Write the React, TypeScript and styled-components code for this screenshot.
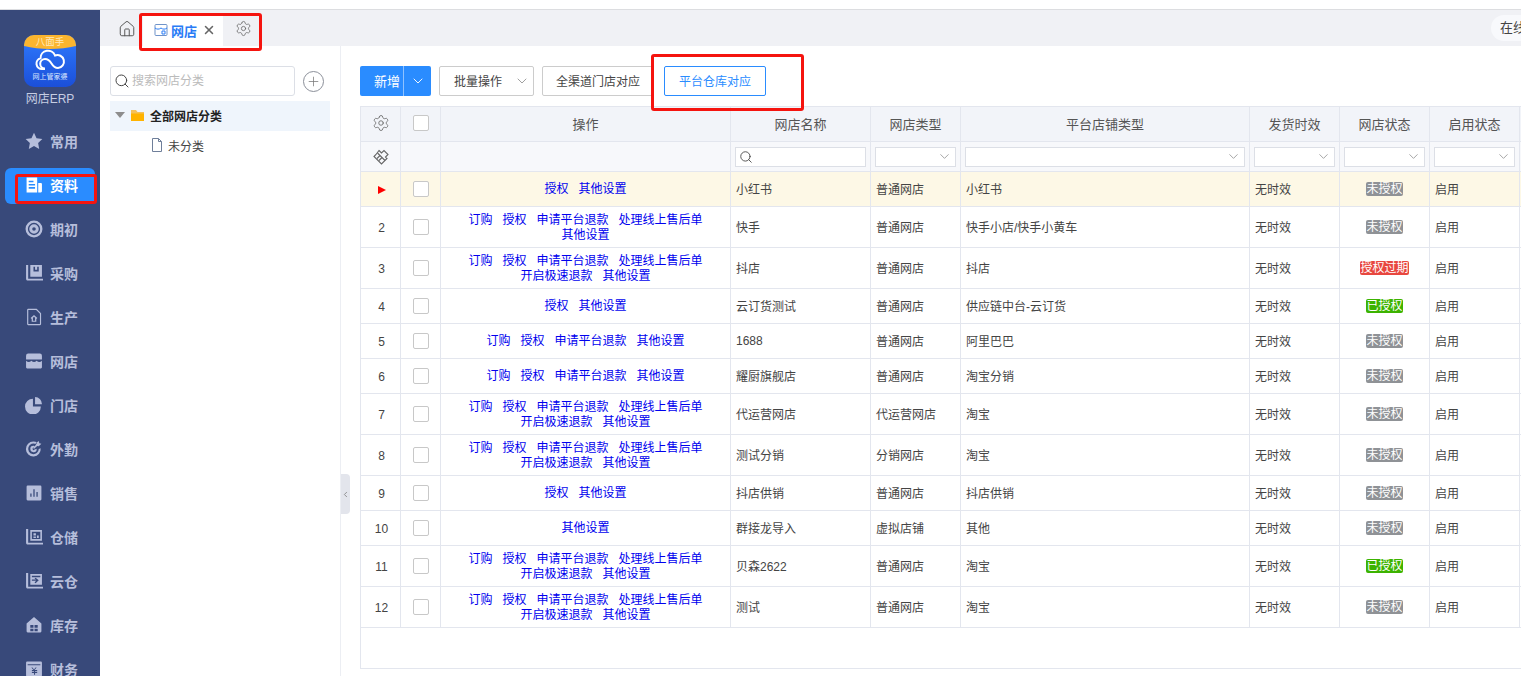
import React from 'react';
import styled, { createGlobalStyle } from 'styled-components';
import { ChevronDown, ChevronLeft, House, Plus, Search, Settings, X } from 'lucide-react';

const GlobalStyle = createGlobalStyle`
  html, body { margin: 0; padding: 0; height: 100%; overflow: hidden; background: #fff; }
  * { box-sizing: border-box; }
  body { font-family: "Liberation Sans", "Noto Sans CJK SC", sans-serif; font-size: 12px; color: #444; }
`;

const Page = styled.div`
  position: relative;
  width: 1521px;
  height: 676px;
  overflow: hidden;
  display: flex;
  flex-direction: column;
`;
const TopStrip = styled.div`
  flex: 0 0 10px;
  border-bottom: 1px solid #dcdde0;
`;
const Body = styled.div`
  flex: 1;
  display: flex;
  min-height: 0;
`;

/* left nav */
const Sidebar = styled.nav`
  flex: 0 0 100px;
  background: #38497a;
  display: flex;
  flex-direction: column;
  align-items: center;
  padding-top: 25px;
  overflow: hidden;
`;
const LogoBox = styled.svg`
  width: 52px;
  height: 52px;
  flex: none;
`;
const BrandName = styled.div`
  margin-top: 4px;
  margin-bottom: 17px;
  color: #c6cde2;
  font-size: 12px;
  line-height: 16px;
`;
const NavItem = styled.div<{ $active?: boolean }>`
  flex: none;
  width: 90px;
  height: 36px;
  margin-bottom: 8px;
  padding: 0 0 2px 20px;
  display: flex;
  align-items: center;
  gap: 7px;
  border-radius: 6px;
  font-size: 14px;
  font-weight: 700;
  background: ${(p) => (p.$active ? '#2a8cff' : 'transparent')};
  color: ${(p) => (p.$active ? '#fff' : '#b6bedb')};
`;
const NavGlyph = styled.svg`
  width: 18px;
  height: 18px;
  flex: none;
  fill: currentColor;
`;

/* tabs */
const Main = styled.div`
  flex: 1;
  min-width: 0;
  display: flex;
  flex-direction: column;
`;
const TabBar = styled.div`
  flex: 0 0 36px;
  background: #f0f1f5;
  display: flex;
  align-items: flex-end;
  padding-left: 18px;
  color: #555;
`;
const HomeBtn = styled.div`
  height: 36px;
  display: flex;
  align-items: center;
  margin-right: 7px;
  padding-top: 2px;
`;
const Tab = styled.div`
  width: 80px;
  height: 30px;
  background: #fff;
  display: flex;
  align-items: center;
  padding: 0 0 2px 11px;
  gap: 3px;
  color: #2a7cf6;
  font-size: 13px;
  font-weight: 700;
`;
const TabClose = styled(X)`
  color: #666;
  margin-left: 2px;
`;
const TabGear = styled.div`
  height: 36px;
  display: flex;
  align-items: center;
  margin-left: 12px;
  color: #666;
`;
const OnlinePill = styled.div`
  flex: none;
  width: 70px;
  height: 26px;
  margin: 0 -40px 5px auto;
  padding-left: 9px;
  border-radius: 13px;
  background: #f8f9fc;
  font-size: 13px;
  line-height: 26px;
  color: #444;
  white-space: nowrap;
`;

/* tree */
const Content = styled.div`
  flex: 1;
  display: flex;
  min-height: 0;
`;
const TreePanel = styled.aside`
  position: relative;
  flex: 0 0 241px;
  padding: 20px 10px 0;
  border-right: 1px solid #eceef3;
`;
const TreeSearchRow = styled.div`
  display: flex;
  align-items: center;
  gap: 8px;
  height: 30px;
`;
const TreeSearch = styled.div`
  width: 185px;
  height: 30px;
  border: 1px solid #dcdfe6;
  border-radius: 3px;
  display: flex;
  align-items: center;
  gap: 2px;
  padding: 0 0 3px 3px;
  color: #bbb;
  font-size: 12px;
  svg { color: #444; margin-top: 3px; }
`;
const RoundAdd = styled.div`
  width: 21px;
  height: 21px;
  border: 1px solid #8b8f99;
  border-radius: 50%;
  display: flex;
  align-items: center;
  justify-content: center;
  color: #777;
`;
const TreeRoot = styled.div`
  margin-top: 5px;
  width: 220px;
  height: 30px;
  background: #eff5fc;
  display: flex;
  align-items: center;
  padding: 0 0 2px 5px;
  gap: 5px;
  color: #222;
  font-weight: 700;
`;
const Caret = styled.span`
  width: 0;
  height: 0;
  border-left: 5px solid transparent;
  border-right: 5px solid transparent;
  border-top: 6px solid #8d8d8d;
`;
const TreeLeaf = styled.div`
  height: 30px;
  display: flex;
  align-items: center;
  padding: 0 0 2px 41px;
  gap: 5px;
  color: #444;
`;
const Collapse = styled.div`
  position: absolute;
  right: -10px;
  top: 428px;
  width: 9px;
  height: 40px;
  background: #e3e5ec;
  border-radius: 0 4px 4px 0;
  display: flex;
  align-items: center;
  justify-content: center;
  color: #777;
`;

/* toolbar + table */
const TablePanel = styled.section`
  flex: 1;
  min-width: 0;
  padding: 20px 0 0 19px;
  overflow: hidden;
`;
const Toolbar = styled.div`
  height: 30px;
  margin-bottom: 10px;
  display: flex;
  gap: 8px;
`;
const SplitPrimary = styled.div`
  width: 71px;
  height: 30px;
  border-radius: 2px;
  background: #2a8cff;
  color: #fff;
  display: flex;
  align-items: center;
`;
const SplitLabel = styled.span`
  flex: 0 0 44px;
  border-right: 1px solid #8fc2ff;
  height: 30px;
  line-height: 31px;
  padding-left: 14px;
  font-size: 13px;
`;
const SplitArrow = styled.span`
  flex: 1;
  display: flex;
  justify-content: center;
`;
const Btn = styled.div<{ $w: number; $primary?: boolean; $ml?: number }>`
  width: ${(p) => p.$w}px;
  height: 30px;
  margin-left: ${(p) => p.$ml ?? 0}px;
  padding-bottom: 1px;
  border: 1px solid ${(p) => (p.$primary ? '#2a8cff' : '#ccc')};
  border-radius: 2px;
  color: ${(p) => (p.$primary ? '#2a8cff' : '#444')};
  display: flex;
  align-items: center;
  justify-content: center;
  gap: 12px;
  svg { color: #888; margin: 1px -11px 0 0; }
`;
const Grid = styled.table`
  table-layout: fixed;
  border-collapse: collapse;
  width: 1250px;
  td, th { border: 1px solid #e3e6ee; padding: 0; font-weight: 400; }
`;
const HeadRow = styled.tr`
  height: 35px;
  background: #f2f4f9;
  color: #555;
  font-size: 13px;
  text-align: center;
  th { padding-bottom: 2px; }
`;
const FilterRow = styled.tr`
  height: 30px;
  background: #f7f8fb;
`;
const DataRow = styled.tr<{ $h: number; $current?: boolean }>`
  height: ${(p) => p.$h}px;
  background: ${(p) => (p.$current ? '#fdf8e6' : '#fff')};
`;
const CenterCell = styled.td`
  text-align: center;
`;
const IndexCell = styled.td`
  text-align: center;
  padding: 1px 0 0 2px !important;
`;
const ActionCell = styled.td`
  padding-top: 1px !important;
`;
const TextCell = styled.td`
  padding: 0 5px 1px !important;
  white-space: nowrap;
  overflow: hidden;
`;
const Check = styled.span`
  display: inline-block;
  width: 16px;
  height: 16px;
  border: 1px solid #c8c8c8;
  border-radius: 2px;
  background: #fff;
  vertical-align: middle;
`;
const Flag = styled.span`
  display: inline-block;
  width: 0;
  height: 0;
  border-left: 8px solid #f00;
  border-top: 4px solid transparent;
  border-bottom: 4px solid transparent;
`;
const Actions = styled.div`
  display: flex;
  flex-wrap: wrap;
  justify-content: center;
  column-gap: 10px;
  padding: 0 5px;
  line-height: 15px;
  color: #0000ee;
`;
const FilterBox = styled.div`
  height: 20px;
  margin: 0 4px;
  border: 1px solid #dcdfe6;
  background: #fff;
  display: flex;
  align-items: center;
  justify-content: space-between;
  padding: 0 3px;
  color: #888;
  svg.search { color: #444; }
`;
const Status = styled.span<{ $bg: string }>`
  display: inline-block;
  padding: 0;
  height: 14px;
  line-height: 14px;
  border-radius: 2px;
  background: ${(p) => p.$bg};
  color: #fff;
`;
const EmptyBand = styled.div`
  width: 1250px;
  height: 41px;
  border-left: 1px solid #e3e6ee;
  border-bottom: 1px solid #e3e6ee;
`;

/* red review marks over the shot */
const Mark = styled.div<{ $x: number; $y: number; $w: number; $h: number }>`
  position: absolute;
  left: ${(p) => p.$x}px;
  top: ${(p) => p.$y}px;
  width: ${(p) => p.$w}px;
  height: ${(p) => p.$h}px;
  border: 3px solid #f5140f;
  border-radius: 3px;
  pointer-events: none;
`;

const icons: Record<string, React.ReactNode> = {
  star: <path d="M8.500 .8l2.400 5 5.500.8-4 3.900 1 5.500-4.900-2.700-4.900 2.700 1-5.500-4-3.900 5.500-.8z" />,
  doc: <path fillRule="evenodd" d="M1.500 1.500h10v14h-10zM3.500 4.500v1.500h4.500V4.500zm0 3v1.500h6V7.500zm0 3v1.500h6v-1.500zM12.500 6.500h2.500a1 1 0 0 1 1 1v7a1 1 0 0 1-1 1h-2.500z" />,
  ring: <path fillRule="evenodd" d="M8.500 .5a8 8 0 1 1 0 16 8 8 0 0 1 0-16zm0 2.200a5.800 5.800 0 1 0 0 11.600 5.800 5.800 0 0 0 0-11.600zm0 1.300a4.500 4.500 0 1 1 0 9 4.500 4.500 0 0 1 0-9zm0 2.800a1.700 1.700 0 1 0 0 3.400 1.700 1.700 0 0 0 0-3.400z" />,
  buy: <path fillRule="evenodd" d="M1 1h2v13h14v1.500H3a1.500 1.500 0 0 1-2-1.500zM5 1h11v11H5zm3 1.500V7h5V2.500h-1.500V5.500h-2V2.500z" />,
  make: <path fillRule="evenodd" d="M3 .8h8l4.200 4.200v10.200a1 1 0 0 1-1 1H3a1 1 0 0 1-1-1V1.800a1 1 0 0 1 1-1zm.1 1.100v13.300h11V5.500L10.500 1.900zM8.500 6.500l3.200 3-1 .8V13H6.300v-2.700l-1-.8zm0 1.700L7.500 9.200V12h2V9.200z" />,
  shop: <path fillRule="evenodd" d="M3 1.500h11a2 2 0 0 1 2 2V7H1V3.500a2 2 0 0 1 2-2zM1 8.300c1.700 1.500 3.400 1.500 5 0 1.700 1.500 3.400 1.500 5 0 1.700 1.500 3.400 1.500 5 0v6.200a1 1 0 0 1-1 1H2a1 1 0 0 1-1-1z" />,
  pie: <path d="M7.500 2.500v7.500H15A7.500 7.500 0 1 1 7.500 2.500zM9.500 1A6.500 6.500 0 0 1 16 7.800H9.500z" />,
  aim: <path fillRule="evenodd" d="M8 1.500a7 7 0 0 1 3.500.9L10.500 4A5 5 0 1 0 13 8.500l1.800-.8A7 7 0 1 1 8 1.500zm0 4a3 3 0 0 1 .9.100L8 7.500a1 1 0 1 0 1 1.500l2-.8A3 3 0 1 1 8 5.500zM13 1l.5 2 2 .5-2.500 2.500-1.500-.4L8.700 8.300l-1-1 2.700-2.700-.4-1.500z" />,
  sales: <path fillRule="evenodd" d="M2.500 1.500h12a1 1 0 0 1 1 1v12a1 1 0 0 1-1 1h-12a1 1 0 0 1-1-1v-12a1 1 0 0 1 1-1zM5 9v3h1.200V9zm2.900-4v7h1.200V5zm2.900 2.500V12H12V7.500z" />,
  store: <path fillRule="evenodd" d="M1 1h2v13h14v1.500H3a1.500 1.500 0 0 1-2-1.500zM5 2h11v10H5zm1.500 1.500v7H14.500v-7zM8 5h2.300v2H8zm0 3h2.300v1.500H8zm3.300-1H13v2.500h-1.700z" />,
  cloud: <path fillRule="evenodd" d="M1 1h2v13h14v1.500H3a1.500 1.500 0 0 1-2-1.500zM5 2h11v10H5zm1.500 1.500V5H14.500V3.500zM6.500 7v1.300h4L9 9.800l1 .8 3-2.900-3-2.300-1 .9 1.500.7z" />,
  stock: <path fillRule="evenodd" d="M8.500 1L15.500 7v7.500a1 1 0 0 1-1 1h-12a1 1 0 0 1-1-1V7zM5 8.500V11h3V8.500zm4 0V11h3V8.500zM5 12v2.500h3V12zm4 0v2.500h3V12z" />,
  money: <path fillRule="evenodd" d="M2 1.500h13a1 1 0 0 1 1 1v12a1 1 0 0 1-1 1H2a1 1 0 0 1-1-1v-12a1 1 0 0 1 1-1zM2.500 4v1h12V4zm3.500 3l2 2.500H6.500v1h2v.7h-2v1h2V14h1v-1.800h2v-1h-2v-.7h2v-1H9l2-2.500H10L8.500 9 7 7z" />,
};

const navItems = [
  { label: '常用', icon: 'star' },
  { label: '资料', icon: 'doc', active: true },
  { label: '期初', icon: 'ring' },
  { label: '采购', icon: 'buy' },
  { label: '生产', icon: 'make' },
  { label: '网店', icon: 'shop' },
  { label: '门店', icon: 'pie' },
  { label: '外勤', icon: 'aim' },
  { label: '销售', icon: 'sales' },
  { label: '仓储', icon: 'store' },
  { label: '云仓', icon: 'cloud' },
  { label: '库存', icon: 'stock' },
  { label: '财务', icon: 'money' },
];

const FULL = ['订购', '授权', '申请平台退款', '处理线上售后单', '开启极速退款', '其他设置'];
const FULL_NO_SPEED = ['订购', '授权', '申请平台退款', '处理线上售后单', '其他设置'];
const SHORT = ['授权', '其他设置'];
const MID = ['订购', '授权', '申请平台退款', '其他设置'];

const UNAUTH = { text: '未授权', bg: '#8f9296' };
const OK = { text: '已授权', bg: '#3cb300' };
const EXPIRED = { text: '授权过期', bg: '#e8473f' };

const rows = [
  { h: 35, actions: SHORT, name: '小红书', type: '普通网店', platform: '小红书', status: UNAUTH },
  { h: 41, actions: FULL_NO_SPEED, name: '快手', type: '普通网店', platform: '快手小店/快手小黄车', status: UNAUTH },
  { h: 41, actions: FULL, name: '抖店', type: '普通网店', platform: '抖店', status: EXPIRED },
  { h: 35, actions: SHORT, name: '云订货测试', type: '普通网店', platform: '供应链中台-云订货', status: OK },
  { h: 35, actions: MID, name: '1688', type: '普通网店', platform: '阿里巴巴', status: UNAUTH },
  { h: 35, actions: MID, name: '耀厨旗舰店', type: '普通网店', platform: '淘宝分销', status: UNAUTH },
  { h: 41, actions: FULL, name: '代运营网店', type: '代运营网店', platform: '淘宝', status: UNAUTH },
  { h: 41, actions: FULL, name: '测试分销', type: '分销网店', platform: '淘宝', status: UNAUTH },
  { h: 35, actions: SHORT, name: '抖店供销', type: '普通网店', platform: '抖店供销', status: UNAUTH },
  { h: 35, actions: ['其他设置'], name: '群接龙导入', type: '虚拟店铺', platform: '其他', status: UNAUTH },
  { h: 41, actions: FULL, name: '贝森2622', type: '普通网店', platform: '淘宝', status: OK },
  { h: 41, actions: FULL, name: '测试', type: '普通网店', platform: '淘宝', status: UNAUTH },
];

const columns = [
  { w: 40, title: '' },
  { w: 40, title: '' },
  { w: 290, title: '操作' },
  { w: 140, title: '网店名称' },
  { w: 90, title: '网店类型' },
  { w: 289, title: '平台店铺类型' },
  { w: 90, title: '发货时效' },
  { w: 90, title: '网店状态' },
  { w: 90, title: '启用状态' },
  { w: 91, title: '' },
];

function ShopTabIcon() {
  return (
    <svg width="14" height="14" viewBox="0 0 14 14" fill="none" stroke="#6f93c9" strokeWidth="1">
      <rect x="1" y="1.500" width="12" height="11" rx="1" />
      <path d="M1 5c2 1.500 4 1.500 6 0 2 1.500 4 1.500 6 0" stroke="#2a7cf6" />
      <path d="M8 8h3v3H8z" stroke="#2a7cf6" />
    </svg>
  );
}

function Logo() {
  return (
    <LogoBox viewBox="0 0 52 52">
      <defs>
        <linearGradient id="logoBlue" x1="0" y1="0" x2="0" y2="1">
          <stop offset="0" stopColor="#2f7bff" />
          <stop offset="1" stopColor="#1b4fd8" />
        </linearGradient>
      </defs>
      <rect width="52" height="52" rx="10" fill="url(#logoBlue)" />
      <path d="M0 11V10A10 10 0 0 1 10 0h32a10 10 0 0 1 10 10v1c-16 4-36 4-52 0z" fill="#fbb52f" />
      <text x="26" y="10" fontSize="9.500" fill="#ffe9bd" textAnchor="middle">八面手</text>
      <g fill="none" stroke="#fff" strokeWidth="2">
        <path d="M21 34h-3a5.500 5.500 0 0 1-1.500-10.800A7.500 7.500 0 0 1 31 20.500 6.500 6.500 0 1 1 34 33c-3 0-5-2-6.500-4.500S24 24 21 24a4.800 4.800 0 0 0 0 9.600" />
      </g>
      <text x="26" y="44" fontSize="7" fill="#dbe7ff" textAnchor="middle">网上管家婆</text>
    </LogoBox>
  );
}

function FilterEraser() {
  return (
    <svg width="18" height="18" viewBox="0 0 18 18" fill="none" stroke="#666" strokeWidth="1.100" style={{ verticalAlign: 'middle' }}>
      <path d="M7 2.500l2.500 2.500 2.500-2.500 4 4-2.500 2.500 1.500 1.500-5.500 5.500L2 8.500l2-2z" />
      <path d="M5.500 5l7.500 7.500M5 10.500l3-3M7 12.500l3-3" />
    </svg>
  );
}

function Folder() {
  return (
    <svg width="15" height="13" viewBox="0 0 15 13">
      <path d="M1 1h5l1.500 2H14v2H1z" fill="#f5c15a" />
      <path d="M1 4.500h13V12H1z" fill="#ffb300" />
    </svg>
  );
}

function Sheet() {
  return (
    <svg width="12" height="14" viewBox="0 0 12 14" fill="none" stroke="#6f7f9a">
      <path d="M1.500.500h6l3 3v10h-9zM7.500.500v3h3" />
    </svg>
  );
}

export default function App() {
  return (
    <Page>
      <GlobalStyle />
      <TopStrip />
      <Body>
        <Sidebar>
          <Logo />
          <BrandName>网店ERP</BrandName>
          {navItems.map((item) => (
            <NavItem key={item.label} $active={item.active}>
              <NavGlyph viewBox="0 0 17 17">{icons[item.icon]}</NavGlyph>
              {item.label}
            </NavItem>
          ))}
        </Sidebar>
        <Main>
          <TabBar>
            <HomeBtn>
              <House size={18} strokeWidth={1.3} />
            </HomeBtn>
            <Tab>
              <ShopTabIcon />
              网店
              <TabClose size={14} strokeWidth={2.6} />
            </Tab>
            <TabGear>
              <Settings size={17} strokeWidth={1.1} />
            </TabGear>
            <OnlinePill>在线客服</OnlinePill>
          </TabBar>
          <Content>
            <TreePanel>
              <TreeSearchRow>
                <TreeSearch>
                  <Search size={16} strokeWidth={1.5} />
                  搜索网店分类
                </TreeSearch>
                <RoundAdd>
                  <Plus size={15} strokeWidth={1.2} />
                </RoundAdd>
              </TreeSearchRow>
              <TreeRoot>
                <Caret />
                <Folder />
                全部网店分类
              </TreeRoot>
              <TreeLeaf>
                <Sheet />
                未分类
              </TreeLeaf>
              <Collapse>
                <ChevronLeft size={9} strokeWidth={2} />
              </Collapse>
            </TreePanel>
            <TablePanel>
              <Toolbar>
                <SplitPrimary>
                  <SplitLabel>新增</SplitLabel>
                  <SplitArrow>
                    <ChevronDown size={16} strokeWidth={1.4} />
                  </SplitArrow>
                </SplitPrimary>
                <Btn $w={95}>
                  批量操作
                  <ChevronDown size={16} strokeWidth={1.2} />
                </Btn>
                <Btn $w={112}>全渠道门店对应</Btn>
                <Btn $w={102} $primary $ml={2}>平台仓库对应</Btn>
              </Toolbar>
              <Grid>
                <colgroup>
                  {columns.map((c, i) => (
                    <col key={i} width={c.w} />
                  ))}
                </colgroup>
                <thead>
                  <HeadRow>
                    <th><Settings size={18} strokeWidth={1.1} color="#666" style={{ verticalAlign: 'middle' }} /></th>
                    <th><Check /></th>
                    {columns.slice(2).map((c, i) => (
                      <th key={i}>{c.title}</th>
                    ))}
                  </HeadRow>
                  <FilterRow>
                    <CenterCell><FilterEraser /></CenterCell>
                    <td />
                    <td />
                    <td>
                      <FilterBox><Search className="search" size={14} strokeWidth={1.5} /></FilterBox>
                    </td>
                    {[0, 1, 2, 3, 4].map((i) => (
                      <td key={i}>
                        <FilterBox>
                          <span />
                          <ChevronDown size={15} strokeWidth={1.2} />
                        </FilterBox>
                      </td>
                    ))}
                    <td />
                  </FilterRow>
                </thead>
                <tbody>
                  {rows.map((r, i) => (
                    <DataRow key={i} $h={r.h} $current={i === 0}>
                      <IndexCell>{i === 0 ? <Flag /> : i + 1}</IndexCell>
                      <CenterCell><Check /></CenterCell>
                      <ActionCell>
                        <Actions>
                          {r.actions.map((a) => (
                            <span key={a}>{a}</span>
                          ))}
                        </Actions>
                      </ActionCell>
                      <TextCell>{r.name}</TextCell>
                      <TextCell>{r.type}</TextCell>
                      <TextCell>{r.platform}</TextCell>
                      <TextCell>无时效</TextCell>
                      <CenterCell><Status $bg={r.status.bg}>{r.status.text}</Status></CenterCell>
                      <TextCell>启用</TextCell>
                      <td />
                    </DataRow>
                  ))}
                </tbody>
              </Grid>
              <EmptyBand />
            </TablePanel>
          </Content>
        </Main>
      </Body>
      <Mark $x={139} $y={13} $w={123} $h={38} />
      <Mark $x={15} $y={174} $w={82} $h={30} />
      <Mark $x={651} $y={54} $w={153} $h={57} />
    </Page>
  );
}
